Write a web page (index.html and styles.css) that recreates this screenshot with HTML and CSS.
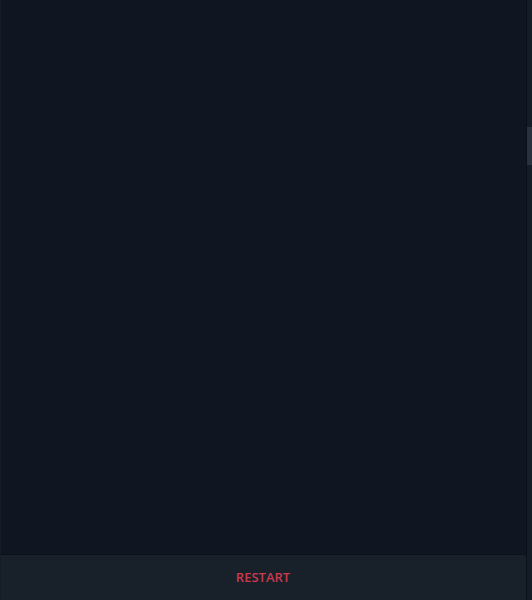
FILE: index.html
```html
<!DOCTYPE html>
<html lang="en">
<head>
    <meta charset="UTF-8">
    <title>Game</title>
    <link rel="stylesheet" href="styles.css">
</head>
<body>
    <div class="app">
        <div class="panel">
            <div class="board"></div>
            <div class="footer">
                <button class="restart">RESTART</button>
            </div>
        </div>
        <div class="scrollbar">
            <div class="thumb"></div>
        </div>
    </div>
</body>
</html>
```

FILE: styles.css
```css
* {
    margin: 0;
    padding: 0;
    box-sizing: border-box;
}

body {
    font-family: 'Open Sans', 'Noto Sans', sans-serif;
    background: #0f1621;
    height: 600px;
    overflow: hidden;
}

.app {
    display: flex;
    height: 600px;
}

.panel {
    flex: 1;
    display: flex;
    flex-direction: column;
    border-left: 1px solid #151d28;
    border-right: 1px solid #0a1018;
}

.board {
    flex: 1;
    background: #0f1621;
}

.footer {
    height: 46px;
    background: #18202a;
    border-top: 1px solid #0b1119;
    display: flex;
    align-items: center;
    justify-content: center;
}

.restart {
    background: none;
    border: none;
    color: #c93b4c;
    font-family: inherit;
    font-size: 13px;
    font-weight: 600;
    margin-left: -1px;
    margin-top: -2px;
    cursor: pointer;
}

.scrollbar {
    width: 5px;
    background: #141c27;
    padding-top: 127px;
}

.thumb {
    height: 38px;
    background: #28313d;
}
```
